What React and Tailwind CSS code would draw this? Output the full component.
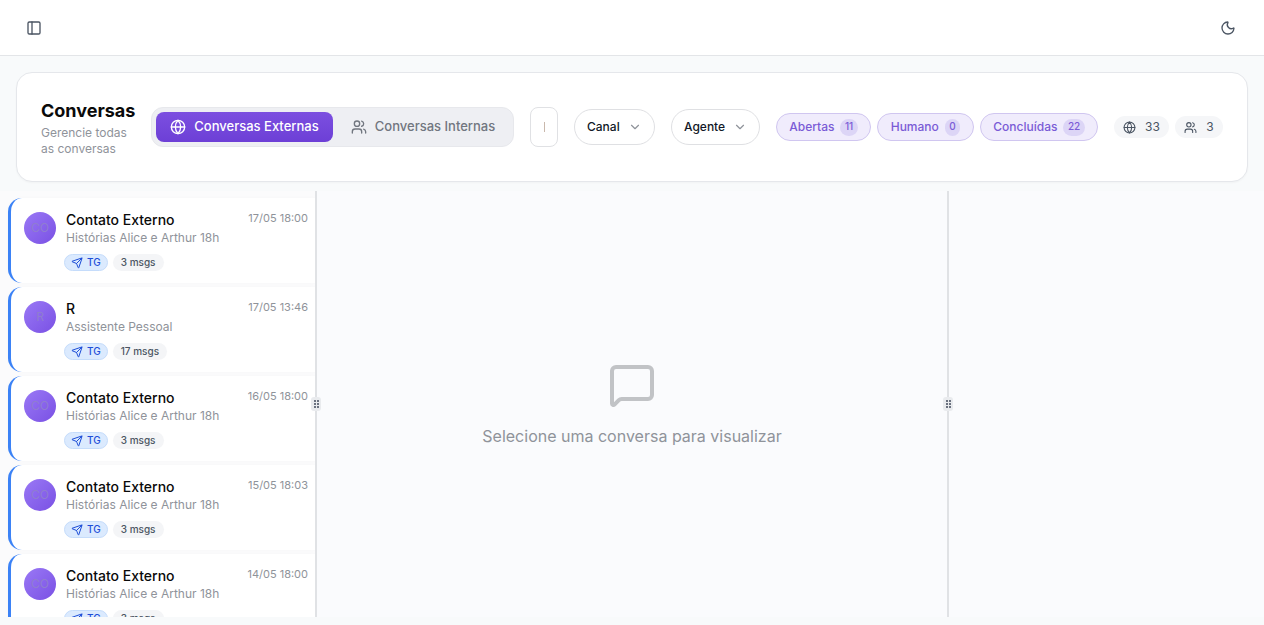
import { ChevronDown, Globe, MessageSquare, Moon, PanelLeft, Send, Users } from "lucide-react";

const conversations = [
  { name: "Contato Externo", initials: "CO", subtitle: "Histórias Alice e Arthur 18h", time: "17/05 18:00", msgs: "3 msgs" },
  { name: "R", initials: "R", subtitle: "Assistente Pessoal", time: "17/05 13:46", msgs: "17 msgs" },
  { name: "Contato Externo", initials: "CO", subtitle: "Histórias Alice e Arthur 18h", time: "16/05 18:00", msgs: "3 msgs" },
  { name: "Contato Externo", initials: "CO", subtitle: "Histórias Alice e Arthur 18h", time: "15/05 18:03", msgs: "3 msgs" },
  { name: "Contato Externo", initials: "CO", subtitle: "Histórias Alice e Arthur 18h", time: "14/05 18:00", msgs: "3 msgs" },
];

const statuses = [
  { label: "Abertas", count: 11, width: "w-[95px]" },
  { label: "Humano", count: 0, width: "w-[97px]" },
  { label: "Concluídas", count: 22, width: "w-[118px]" },
];

function Handle() {
  return (
    <div className="absolute top-1/2 left-1/2 -translate-x-1/2 -translate-y-1/2 w-[10px] h-[14px] bg-[#e9ebee] rounded-[3px] flex flex-col items-center justify-center gap-[1px]">
      {[0, 1, 2].map((i) => (
        <div key={i} className="flex gap-[1px]">
          <span className="w-[2px] h-[2px] bg-[#6b7280]" />
          <span className="w-[2px] h-[2px] bg-[#6b7280]" />
        </div>
      ))}
    </div>
  );
}

function Divider() {
  return (
    <div className="relative w-[2px] shrink-0 bg-[#e0e2e5]">
      <Handle />
    </div>
  );
}

function ConversationCard({ item }) {
  return (
    <div className="h-[85px] shrink-0 bg-white rounded-l-[14px] border-l-[3px] border-[#3b82f6] pl-[13px] pr-[7px] pt-[14px] flex gap-[10px] shadow-[0_0_4px_rgba(0,0,0,0.02)]">
      <div className="w-8 h-8 rounded-full bg-gradient-to-br from-[#9a78f5] to-[#7a50e4] flex items-center justify-center text-xs text-[#8f7dd0] shrink-0">
        {item.initials}
      </div>
      <div className="flex-1 min-w-0">
        <div className="flex justify-between items-start">
          <div className="text-sm font-medium leading-4 text-[#0a0a0a]">{item.name}</div>
          <div className="text-[11px] leading-3 text-[#8f939a]">{item.time}</div>
        </div>
        <div className="text-xs leading-4 text-[#8f939a] mt-[2px]">{item.subtitle}</div>
        <div className="flex items-center gap-[5px] mt-[8px] -ml-[2px]">
          <span className="h-[17px] px-[6px] rounded-full bg-[#dbeafe] border border-[#c5dcfb] text-[#1d4ed8] text-[10px] font-medium flex items-center gap-[4px]">
            <Send className="w-3 h-3" />
            TG
          </span>
          <span className="h-[17px] px-[8px] rounded-full bg-[#f4f5f7] text-[#4b5563] text-[10px] font-medium flex items-center">
            {item.msgs}
          </span>
        </div>
      </div>
    </div>
  );
}

export default function App() {
  return (
    <div className="h-[625px] overflow-hidden bg-[#f8fafb] flex flex-col font-['Inter',sans-serif]">
      {/* Header */}
      <header className="h-14 shrink-0 bg-white border-b border-[#e3e5e8] flex items-center justify-between pl-[26px] pr-[28px]">
        <PanelLeft className="w-4 h-4 text-[#4b5563]" />
        <Moon className="w-4 h-4 text-[#4b5563]" />
      </header>

      {/* Toolbar */}
      <div className="mt-4 mx-4 h-[110px] shrink-0 bg-white border border-[#e5e7eb] rounded-2xl flex items-center pl-6 pr-[24px] shadow-[0_1px_2px_rgba(0,0,0,0.03)]">
        <div className="w-[110px] shrink-0 pt-[4px]">
          <h1 className="text-lg leading-5 font-bold text-[#0a0a0a]">Conversas</h1>
          <p className="text-xs leading-4 text-[#8f939a] mt-[4px]">
            Gerencie todas
            <br />
            as conversas
          </p>
        </div>

        <div className="w-[363px] h-10 shrink-0 bg-[#eeeff3] border border-[#e7e8ec] rounded-xl flex items-center p-1">
          <div className="w-[177px] h-[30px] rounded-lg bg-gradient-to-b from-[#7c4fe0] to-[#6d3fd6] text-white text-[13px] font-medium flex items-center justify-center gap-2">
            <Globe className="w-4 h-4" />
            Conversas Externas
          </div>
          <div className="flex-1 pl-1 text-[13px] font-medium text-[#71767f] flex items-center justify-center gap-2">
            <Users className="w-4 h-4" />
            Conversas Internas
          </div>
        </div>

        <div className="ml-4 w-7 h-10 shrink-0 bg-white border border-[#e0e1e4] rounded-lg flex items-center justify-center">
          <span className="w-px h-[10px] bg-[#c9b8ac]" />
        </div>

        <button className="ml-4 w-[81px] h-9 shrink-0 bg-white border border-[#dfe0e3] rounded-full pl-3 flex items-center gap-2 text-xs font-medium text-[#111827]">
          Canal
          <ChevronDown className="w-3.5 h-3.5 text-[#8f939a]" />
        </button>
        <button className="ml-4 w-[89px] h-9 shrink-0 bg-white border border-[#dfe0e3] rounded-full pl-3 flex items-center gap-2 text-xs font-medium text-[#111827]">
          Agente
          <ChevronDown className="w-3.5 h-3.5 text-[#8f939a]" />
        </button>

        <div className="ml-4 flex gap-[6px] shrink-0">
          {statuses.map((s) => (
            <div
              key={s.label}
              className={`${s.width} h-7 rounded-full bg-[#f0ecfc] border border-[#d0c6f0] flex items-center justify-center gap-[6px] text-xs font-medium text-[#7a5bd6]`}
            >
              {s.label}
              <span className="h-[17px] px-[4.5px] rounded-full bg-[#dcd5f6] text-[10px] flex items-center justify-center">
                {s.count}
              </span>
            </div>
          ))}
        </div>

        <div className="ml-auto flex gap-[6px] shrink-0">
          <div className="h-[22px] w-[55px] rounded-full bg-[#f5f6f8] flex items-center justify-center gap-[9px] text-xs text-[#4b5563]">
            <Globe className="w-[13px] h-[13px]" />
            33
          </div>
          <div className="h-[22px] w-[48px] rounded-full bg-[#f5f6f8] flex items-center justify-center gap-[9px] text-xs text-[#4b5563]">
            <Users className="w-[13px] h-[13px]" />3
          </div>
        </div>
      </div>

      {/* Panels */}
      <div className="mt-[9px] h-[426px] shrink-0 flex">
        <div className="w-[315px] shrink-0 pl-2 pt-[7px] flex flex-col gap-1 overflow-hidden bg-[#fbfbfc]">
          {conversations.map((item, i) => (
            <ConversationCard key={i} item={item} />
          ))}
        </div>
        <Divider />
        <div className="w-[630px] shrink-0 flex flex-col items-center pt-[170px] bg-[#fafbfd]">
          <MessageSquare className="w-12 h-12 text-[#c1c3c6]" />
          <p className="mt-[15px] text-base leading-6 text-[#8f939a]">Selecione uma conversa para visualizar</p>
        </div>
        <Divider />
        <div className="flex-1 bg-[#fafbfd]" />
      </div>
    </div>
  );
}
